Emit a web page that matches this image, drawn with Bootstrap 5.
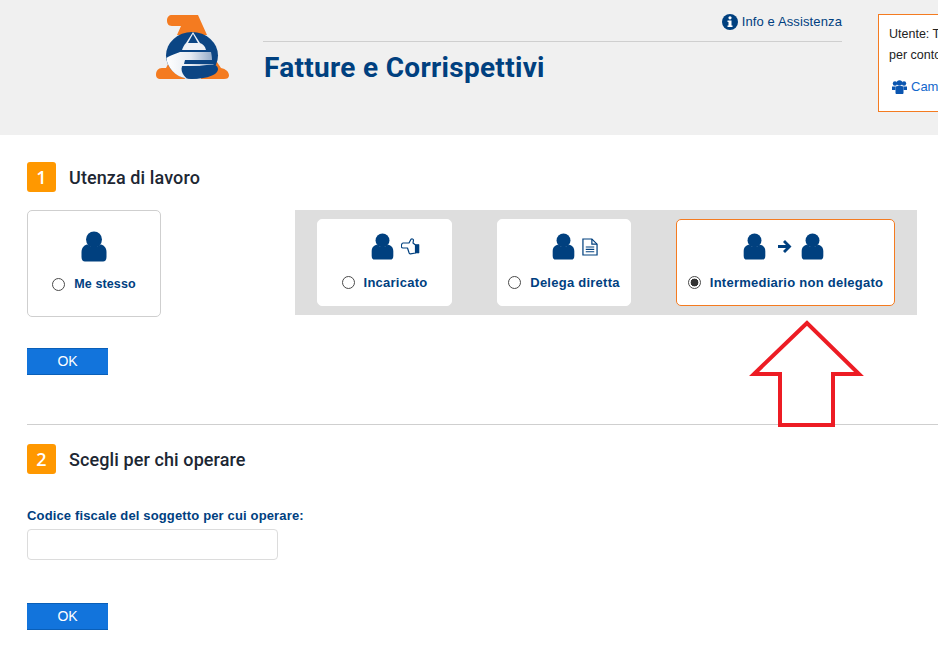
<!DOCTYPE html>
<html lang="it">
<head>
  <meta charset="UTF-8" />
  <meta name="viewport" content="width=device-width, initial-scale=1.0" />
  <title>Fatture e Corrispettivi</title>
  <link href="https://cdn.jsdelivr.net/npm/bootstrap@5.3.2/dist/css/bootstrap.min.css" rel="stylesheet" />
  <style>
    html, body { overflow: hidden; }
    body {
      font-family: "Liberation Sans", Arial, sans-serif;
      font-size: 13px;
      background: #fff;
      position: relative;
      height: 657px;
    }
    .top-band {
      height: 135px;
      background: #f0f0f0;
      padding: 14px 0 0 155px;
      overflow: hidden;
    }
    .brand-logo { width: 75px; height: 65px; flex: none; margin-top: 1px; }
    .brand-block { width: 579px; margin-left: 33px; flex: none; }
    .info-line {
      height: 28px;
      border-bottom: 1px solid #cfcfcf;
      color: #003f80;
      font-size: 13px;
      line-height: 16px;
      letter-spacing: .12px;
    }
    .app-title {
      font-family: Roboto, sans-serif;
      font-weight: 700;
      font-size: 28px;
      letter-spacing: .3px;
      line-height: 32px;
      color: #00407f;
      margin: 10px 0 0 1px;
    }
    .user-box {
      width: 300px;
      height: 98px;
      flex: none;
      margin-left: 36px;
      background: #fff;
      border: 1px solid #f47b20;
      padding: 9px 10px;
      font-size: 12.5px;
      line-height: 20.5px;
      color: #222;
    }
    .user-switch { color: #1268cc; margin: 12px 0 0 3px; font-size: 13px; }
    .step-block { padding-left: 27px; }
    .step-head { height: 30px; margin-top: 27px; }
    .step-num {
      width: 29px;
      height: 30px;
      background: #ff9800;
      color: #fff;
      border-radius: 3px;
      font-family: "Open Sans", sans-serif;
      font-size: 18px;
      font-weight: 600;
    }
    .step-title {
      font-family: Roboto, sans-serif;
      font-weight: 500;
      font-size: 18px;
      letter-spacing: .1px;
      color: #1d2733;
      margin: 1px 0 0 13px;
    }
    .pick-card {
      background: #fff;
      border: 1px solid #cfcfcf;
      border-radius: 5px;
      color: #00407f;
      font-weight: 700;
      font-size: 13px;
      letter-spacing: .25px;
      margin: 0;
    }
    .pick-me { width: 134px; height: 107px; padding-top: 20px; font-size: 12.5px; letter-spacing: .1px; }
    .pick-other { height: 87px; padding-top: 13px; border-color: #fff; }
    .pick-other.pick-on { border-color: #f47b20; }
    .pick-icons { height: 27px; margin-bottom: 13px; }
    .pick-me .pick-icons { height: 32px; margin-bottom: 12px; }
    .pick-gap { gap: 7px; padding-left: 22px; }
    .arrow-gap { margin-left: 3px; }
    .pick-panel {
      width: 622px;
      height: 105px;
      margin-left: 134px;
      background: #dedede;
      padding: 9px 22px;
    }
    .radio-pick {
      appearance: none;
      width: 13px;
      height: 13px;
      margin: 0 9px 0 0;
      flex: none;
      border: 1px solid #4a4a4a;
      border-radius: 50%;
      background: #fff;
    }
    .radio-pick:checked { background: radial-gradient(circle, #333 0 3.6px, #fff 4.2px); }
    .w-incaricato { width: 135px; }
    .w-delega { width: 134px; }
    .w-intermed { width: 219px; }
    .ok-btn {
      display: block;
      width: 81px;
      height: 27px;
      padding: 0;
      border: 0;
      border-top: 1px solid #0a5fb8;
      border-bottom: 1px solid #0a5fb8;
      border-radius: 0;
      background: #1274dc;
      color: #fff;
      font-size: 14px;
    }
    .ok-first { margin-top: 31px; }
    .ok-second { margin-top: 43px; }
    .step-rule { height: 1px; background: #cfcfcf; margin: 49px 0 0 0; }
    .step-head-second { margin-top: 19px; }
    .row-picks { margin-top: 18px; }
    .cf-label { color: #00407f; font-weight: 700; font-size: 13px; letter-spacing: .15px; margin: 34px 0 6px; display: block; line-height: 15px; }
    .cf-input {
      width: 251px;
      height: 31px;
      border: 1px solid #dcdcdc;
      border-radius: 4px;
      padding: 0 8px;
      box-shadow: none;
    }
    .big-arrow { position: absolute; left: 745px; top: 316px; width: 122px; height: 116px; }
  </style>
</head>
<body>
  <svg width="0" height="0" class="position-absolute">
    <symbol id="person" viewBox="0 0 26 31">
      <circle cx="13" cy="8.500" r="8" fill="#00407f"/>
      <path d="M0.500 26 V21 C0.500 16 4 13.500 7 13.500 C9 16.500 17 16.500 19 13.500 C22 13.500 25.500 16 25.500 21 V26 C25.500 29 24 30.500 22 30.500 H4 C2 30.500 0.500 29 0.500 26 Z" fill="#00407f"/>
    </symbol>
  </svg>

  <!-- Header -->
  <div class="top-band d-flex align-items-start">
    <svg class="brand-logo" viewBox="0 0 75 65">
      <defs>
        <linearGradient id="eFade" x1="0" x2="1" y1="0" y2="0">
          <stop offset="0" stop-color="#ffffff"/>
          <stop offset=".5" stop-color="#e6ebf2"/>
          <stop offset="1" stop-color="#8aa3c3"/>
        </linearGradient>
      </defs>
      <path d="M17 0 H43 L52 20 H22 L26 11 H17 C13 11 12 8 12 5.500 C12 2 14 0 17 0 Z" fill="#f47b20"/>
      <path d="M14 47 L26 50 L30 64 H6 C2 64 1 62 1 59.500 C1 56 3 53 7 53 H11 Z" fill="#f47b20"/>
      <path d="M48 47 H62 L66 53 C71 54 74 57 74 60.500 C74 63 72 64 69 64 H46 Z" fill="#f47b20"/>
      <ellipse cx="37" cy="40.500" rx="26" ry="23.500" fill="#0b4584"/>
      <path d="M38 17 L45 28 C48 29 50 31 51 35 H27 C28 32 29 30 31 28 Z" fill="#eef1f6"/>
      <path d="M25 37 H56 C56.500 39 57 42 57 45 H30 L29 49 H58 L60 51 H28 C25 53 27 60 32 63.500 C20 62 12 52 11.500 43 C14 41 20 39 25 37 Z" fill="url(#eFade)"/>
      <path d="M38 19 L43 28 H33 Z" fill="#0b4584"/>
      <path d="M27 51 C38 54 50 49 60 50 C64 52 64 56 60 59 C52 64 40 64 33 63.500 C29 60 26 55 27 51 Z" fill="#0b4584"/>
    </svg>
    <div class="brand-block">
      <div class="info-line d-flex justify-content-end align-items-start">
        <svg width="16" height="16" viewBox="0 0 16 16" class="me-1">
          <circle cx="8" cy="8" r="8" fill="#00407f"/>
          <circle cx="8" cy="3.800" r="1.600" fill="#fff"/>
          <path d="M5.500 6.500 H9.500 V11.500 H10.500 V13 H5.500 V11.500 H6.500 V8 H5.500 Z" fill="#fff"/>
        </svg>
        <span>Info e Assistenza</span>
      </div>
      <h1 class="app-title">Fatture e Corrispettivi</h1>
    </div>
    <div class="user-box">
      <div class="text-nowrap">Utente: TEST</div>
      <div class="text-nowrap">per conto di</div>
      <div class="user-switch d-flex align-items-center text-nowrap">
        <svg width="15" height="14" viewBox="0 0 15 14" class="me-1">
          <g fill="#0a55b0">
            <circle cx="3" cy="3.500" r="2.200"/><circle cx="12" cy="3.500" r="2.200"/><circle cx="7.500" cy="3" r="2.800"/>
            <path d="M0 6.500 H3.500 V10 H0 Z"/><path d="M11.500 6.500 H15 V10 H11.500 Z"/>
            <path d="M3.500 7 C3.500 6 5 6 7.500 6 C10 6 11.500 6 11.500 7 V13 C11.500 13.500 11 14 10.500 14 H4.500 C4 14 3.500 13.500 3.500 13 Z"/>
          </g>
        </svg>
        <span>Cambia utenza</span>
      </div>
    </div>
  </div>

  <!-- Step 1 -->
  <div class="step-block">
    <div class="step-head d-flex align-items-center">
      <div class="step-num d-flex align-items-center justify-content-center">1</div>
      <h2 class="step-title">Utenza di lavoro</h2>
    </div>
    <div class="d-flex align-items-start row-picks">
      <label class="pick-card pick-me text-center">
        <div class="pick-icons d-flex justify-content-center"><svg width="26" height="31"><use href="#person"/></svg></div>
        <div class="d-flex align-items-center justify-content-center"><input type="radio" name="utenza" class="radio-pick"> Me stesso</div>
      </label>
      <div class="pick-panel d-flex justify-content-between align-items-start">
        <label class="pick-card pick-other w-incaricato">
          <div class="pick-icons d-flex justify-content-center align-items-center pick-gap">
            <svg width="23" height="27" viewBox="0 0 26 31"><use href="#person"/></svg>
            <svg width="19" height="17" viewBox="0 0 19 17" fill="none" stroke="#00407f" stroke-width="1.200" stroke-linejoin="round">
              <path d="M2 5 H8 L10 1.200 C10.800 .6 12.300 .9 12.500 2 L12 5 L14.500 7 V15 L9.500 15.800 C8.500 16 8 15 7.800 14 L6.500 10 H2 C.4 10 .2 8.800 .4 7.500 C.6 6 1 5 2 5 Z" fill="#fff"/>
              <path d="M14.500 6.500 H18 V15 H14.500 Z" fill="#00407f" stroke-width=".6"/>
            </svg>
          </div>
          <div class="d-flex align-items-center justify-content-center"><input type="radio" name="utenza" class="radio-pick"> Incaricato</div>
        </label>
        <label class="pick-card pick-other w-delega">
          <div class="pick-icons d-flex justify-content-center align-items-center pick-gap">
            <svg width="23" height="27" viewBox="0 0 26 31"><use href="#person"/></svg>
            <svg width="16" height="18" viewBox="0 0 17 19" fill="none" stroke="#00407f" stroke-width="1.300">
              <path d="M1 1 H10.500 L16 6.500 V18 H1 Z"/>
              <path d="M10.500 1 V6.500 H16"/>
              <path d="M4 9.500 H13 M4 12 H13 M4 14.500 H13" stroke-width="1.200"/>
            </svg>
          </div>
          <div class="d-flex align-items-center justify-content-center"><input type="radio" name="utenza" class="radio-pick"> Delega diretta</div>
        </label>
        <label class="pick-card pick-other pick-on w-intermed">
          <div class="pick-icons d-flex justify-content-center align-items-center gap-2 pe-1">
            <svg width="23" height="27" viewBox="0 0 26 31"><use href="#person"/></svg>
            <svg width="16" height="15" viewBox="0 0 16 15" class="arrow-gap"><path d="M8 1 L14.500 7.500 L8 14 L6 12 L9 9 H1 V6 H9 L6 3 Z" fill="#00407f"/></svg>
            <svg width="23" height="27" viewBox="0 0 26 31"><use href="#person"/></svg>
          </div>
          <div class="d-flex align-items-center justify-content-center"><input type="radio" name="utenza" class="radio-pick" checked> Intermediario non delegato</div>
        </label>
      </div>
    </div>
    <button type="button" class="btn ok-btn ok-first">OK</button>
    <div class="step-rule"></div>
  </div>

  <!-- Step 2 -->
  <div class="step-block">
    <div class="step-head step-head-second d-flex align-items-center">
      <div class="step-num d-flex align-items-center justify-content-center">2</div>
      <h2 class="step-title">Scegli per chi operare</h2>
    </div>
    <label class="cf-label" for="cfSoggetto">Codice fiscale del soggetto per cui operare:</label>
    <input type="text" id="cfSoggetto" class="form-control cf-input">
    <button type="button" class="btn ok-btn ok-second">OK</button>
  </div>

  <!-- arrow drawn on top of the page -->
  <svg class="big-arrow" viewBox="745 316 122 116">
    <path d="M807 323 L754 374 H780 V425 H833 V374 H859 Z" fill="#fff" stroke="#ed1c24" stroke-width="4" stroke-linejoin="miter"/>
  </svg>

  <script src="https://cdn.jsdelivr.net/npm/bootstrap@5.3.2/dist/js/bootstrap.bundle.min.js"></script>
</body>
</html>
